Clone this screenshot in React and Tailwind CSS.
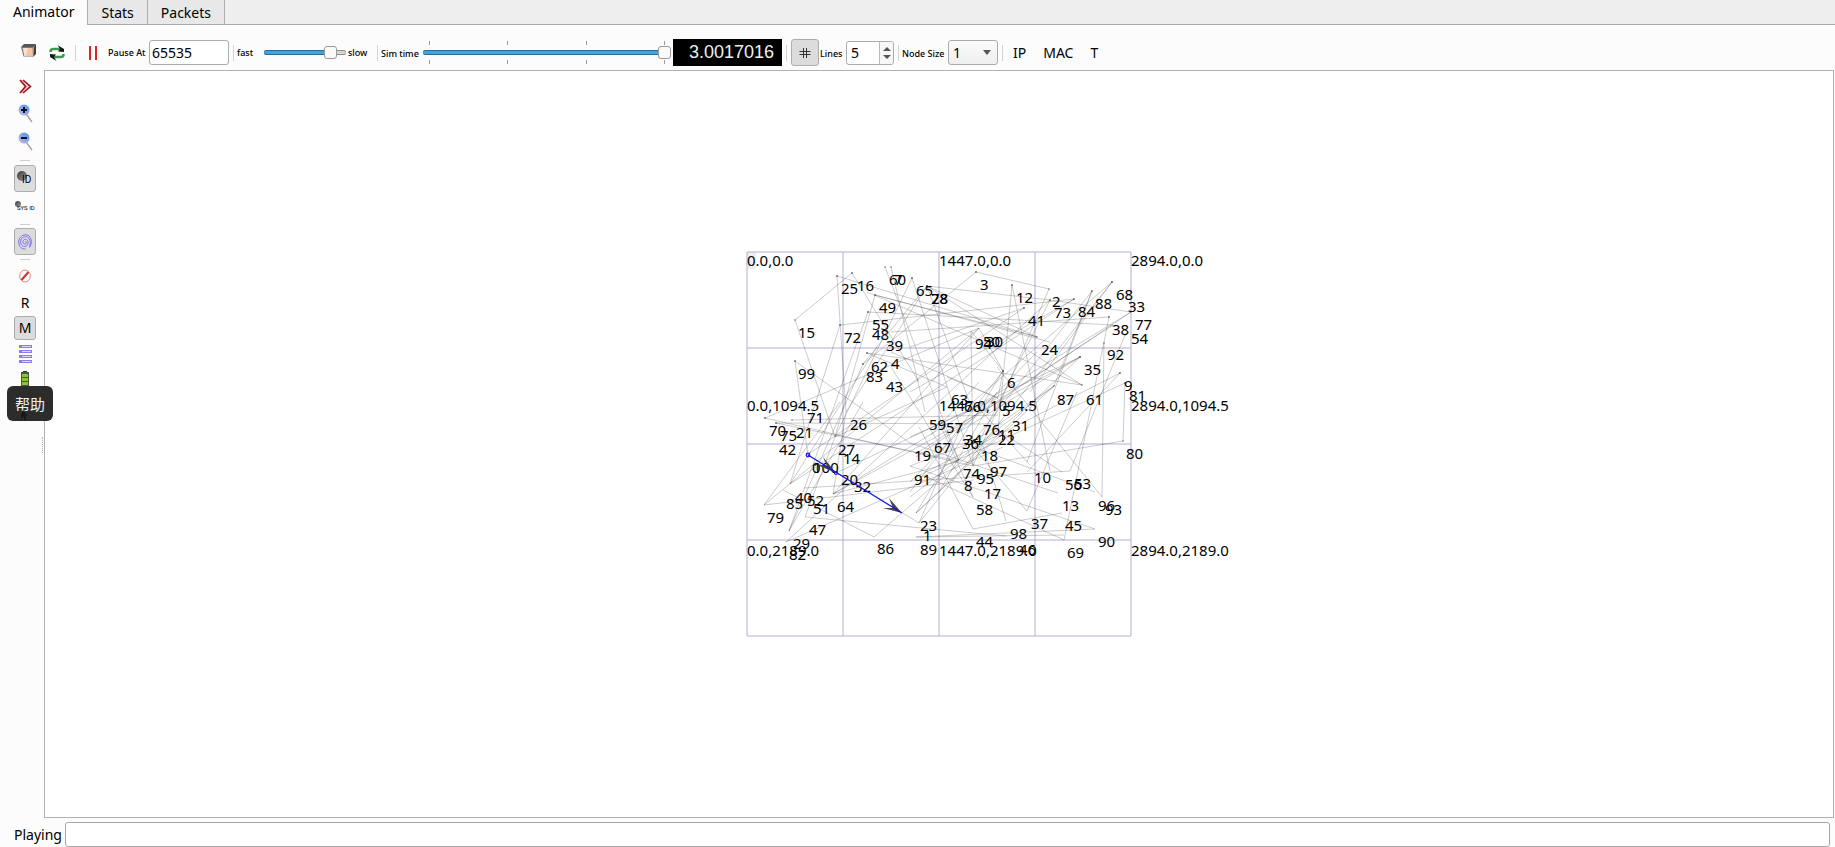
import { useState } from 'react';

// Coordinates inside the 384x384 scene grid: [text, x, baseline]
const NODE_LABELS = [
  ['25', 94, 42], ['16', 110, 39], ['60', 142, 33], ['7', 147, 33], ['65', 169, 44],
  ['28', 184, 52], ['78', 184, 52], ['49', 132, 61], ['55', 125, 78], ['48', 125, 88],
  ['39', 139, 99], ['15', 51, 86], ['72', 97, 91], ['99', 51, 127], ['62', 124, 120],
  ['4', 144, 117], ['83', 119, 130], ['43', 139, 140], ['71', 60, 171], ['26', 103, 178],
  ['59', 182, 178], ['57', 199, 181], ['70', 22, 184], ['75', 33, 189], ['21', 49, 186],
  ['63', 204, 153], ['66', 217, 160], ['3', 233, 38], ['12', 269, 51], ['2', 305, 55],
  ['73', 307, 66], ['84', 331, 65], ['88', 348, 57], ['68', 369, 48], ['33', 381, 60],
  ['41', 281, 74], ['38', 365, 83], ['77', 388, 78], ['54', 384, 92], ['94', 228, 97],
  ['50', 236, 95], ['30', 239, 95], ['24', 294, 103], ['92', 360, 108], ['35', 337, 123],
  ['6', 260, 136], ['9', 377, 139], ['81', 382, 149], ['87', 310, 153], ['61', 339, 153],
  ['5', 255, 164], ['31', 265, 179], ['76', 236, 183], ['11', 251, 188], ['22', 251, 193],
  ['34', 218, 193], ['36', 215, 197], ['67', 187, 201], ['18', 234, 209], ['19', 167, 209],
  ['74', 216, 227], ['97', 243, 225], ['95', 230, 232], ['91', 167, 233], ['8', 217, 239],
  ['10', 287, 231], ['42', 32, 203], ['27', 91, 203], ['14', 96, 212], ['0', 65, 221],
  ['100', 66, 221], ['20', 94, 233], ['32', 107, 240], ['40', 48, 251], ['52', 60, 254],
  ['85', 39, 257], ['51', 66, 262], ['64', 90, 260], ['79', 20, 271], ['47', 62, 283],
  ['29', 46, 297], ['82', 42, 308], ['86', 130, 302], ['89', 173, 303], ['23', 173, 279],
  ['1', 176, 289], ['80', 379, 207], ['56', 318, 238], ['53', 327, 237], ['17', 237, 247],
  ['58', 229, 263], ['13', 315, 259], ['96', 351, 259], ['93', 358, 263], ['37', 284, 277],
  ['45', 318, 279], ['98', 263, 287], ['44', 229, 295], ['46', 272, 303], ['69', 320, 306],
  ['90', 351, 295],
];

const AXIS_LABELS = [
  ['0.0,0.0', 0, 14], ['1447.0,0.0', 192, 14], ['2894.0,0.0', 384, 14],
  ['0.0,1094.5', 0, 159], ['1447.0,1094.5', 192, 159], ['2894.0,1094.5', 384, 159],
  ['0.0,2189.0', 0, 304], ['1447.0,2189.0', 192, 304], ['2894.0,2189.0', 384, 304],
];

// Trails between waypoints: [x1, y1, x2, y2]
const TRAILS = [
  [105, 21, 48, 68], [48, 68, 88, 185], [90, 24, 290, 85], [90, 24, 99, 160],
  [105, 21, 172, 130], [93, 73, 327, 47], [93, 73, 43, 232], [48, 109, 61, 203],
  [48, 109, 163, 191], [18, 166, 232, 76], [18, 166, 226, 214], [29, 171, 212, 209],
  [29, 171, 256, 172], [45, 168, 251, 163], [121, 60, 366, 73], [121, 60, 42, 279],
  [128, 43, 303, 90], [128, 43, 88, 185], [138, 15, 212, 209], [144, 15, 178, 160],
  [165, 26, 226, 214], [165, 26, 88, 185], [120, 101, 200, 135], [120, 101, 335, 133],
  [116, 112, 42, 279], [116, 112, 180, 34], [180, 34, 303, 48], [180, 34, 99, 160],
  [180, 34, 226, 160], [229, 20, 302, 37], [229, 20, 116, 112], [302, 37, 226, 214],
  [265, 33, 251, 178], [265, 33, 303, 219], [303, 48, 232, 190], [303, 48, 384, 60],
  [327, 47, 163, 140], [327, 47, 43, 232], [277, 56, 60, 203], [277, 56, 163, 95],
  [290, 85, 128, 43], [345, 39, 307, 134], [345, 39, 226, 190], [365, 30, 172, 271],
  [365, 30, 283, 140], [365, 30, 226, 150], [362, 65, 317, 288], [362, 65, 144, 80],
  [357, 91, 355, 245], [333, 105, 89, 221], [333, 105, 86, 242], [333, 105, 169, 261],
  [335, 133, 120, 40], [307, 134, 163, 245], [373, 121, 280, 220], [373, 121, 169, 225],
  [384, 60, 169, 205], [378, 83, 323, 219], [378, 131, 376, 189], [378, 131, 172, 226],
  [376, 189, 226, 214], [256, 119, 251, 146], [256, 119, 232, 76], [256, 119, 163, 240],
  [256, 119, 169, 261], [256, 119, 224, 79], [224, 79, 226, 214], [232, 76, 86, 242],
  [232, 76, 17, 253], [251, 146, 163, 185], [303, 48, 39, 290], [366, 73, 172, 200],
  [200, 135, 88, 185], [144, 115, 226, 245], [226, 150, 283, 213], [251, 178, 315, 220],
  [226, 195, 348, 240], [163, 191, 311, 241], [163, 214, 348, 277], [163, 214, 226, 190],
  [184, 183, 232, 130], [212, 209, 86, 242], [57, 236, 226, 225], [226, 225, 323, 219],
  [17, 253, 226, 228], [17, 253, 93, 150], [36, 238, 127, 285], [58, 265, 259, 284],
  [58, 265, 88, 185], [39, 290, 256, 195], [42, 279, 116, 150], [86, 242, 99, 160],
  [127, 285, 251, 178], [172, 271, 61, 203], [172, 271, 212, 180], [169, 285, 348, 277],
  [169, 285, 317, 283], [226, 277, 172, 175], [226, 277, 315, 261], [226, 245, 192, 170],
  [259, 269, 235, 190], [280, 259, 226, 195], [280, 259, 330, 140], [355, 245, 250, 115],
  [317, 288, 180, 225], [212, 209, 192, 165], [163, 230, 290, 100], [192, 240, 250, 140],
  [169, 261, 307, 134], [251, 146, 200, 125], [251, 146, 144, 100], [43, 232, 130, 95],
  [384, 60, 86, 242], [345, 39, 280, 210], [180, 34, 290, 85], [180, 34, 335, 133],
  [307, 134, 226, 190], [333, 105, 212, 180],
];

const GRID = [0, 96, 192, 288, 384];

function Separator({ className = '' }) {
  return <div className={`h-4 w-px shrink-0 bg-[#d4d4d4] ${className}`} />;
}

function SideSeparator() {
  return (
    <div className="flex h-2 items-center">
      <div className="h-px w-[10px] bg-[#cfcfcf]" />
    </div>
  );
}

function SideButton({ label, active, className = 'h-7', onClick, children }) {
  return (
    <button
      type="button"
      aria-label={label}
      onClick={onClick}
      className={`flex w-[22px] shrink-0 items-center justify-center rounded-[3px] ${
        active ? 'border border-[#adadad] bg-[#dcdcdc]' : ''
      } ${className}`}
    >
      {children}
    </button>
  );
}

function Slider({ id, value, onChange, className }) {
  return (
    <input
      id={id}
      type="range"
      min="0"
      max="100"
      value={value}
      onChange={(e) => onChange(Number(e.target.value))}
      style={{ '--fill': `${value}%` }}
      className={`block h-[13px] appearance-none bg-transparent [&::-webkit-slider-runnable-track]:h-[5px] [&::-webkit-slider-runnable-track]:rounded-[2px] [&::-webkit-slider-runnable-track]:bg-[linear-gradient(to_right,#3fa3e3_var(--fill),#d5d5d5_var(--fill))] [&::-webkit-slider-runnable-track]:shadow-[inset_0_1px_0_#00000055,inset_0_-1px_0_#00000055] [&::-webkit-slider-thumb]:-mt-1 [&::-webkit-slider-thumb]:h-[13px] [&::-webkit-slider-thumb]:w-[13px] [&::-webkit-slider-thumb]:appearance-none [&::-webkit-slider-thumb]:rounded-[3px] [&::-webkit-slider-thumb]:border [&::-webkit-slider-thumb]:border-[#999] [&::-webkit-slider-thumb]:bg-[#fafafa] ${className}`}
    />
  );
}

function Ticks() {
  return (
    <div className="flex h-1 justify-between px-[6px]">
      {[0, 1, 2, 3].map((t) => (
        <div key={t} className="h-1 w-px bg-[#999]" />
      ))}
    </div>
  );
}

function CubeIcon() {
  return (
    <svg width="15" height="14" viewBox="0 0 15 14">
      <path d="M0 3 3 0h12l-2 3z" fill="#55575a" />
      <path d="M13 3l2-3v10l-3 3z" fill="#3a3c40" />
      <path d="M0 3h12.500v9.500H2.500z" fill="#8d7568" />
      <path d="M1.500 4h10l.5 8H3.500z" fill="#f3c4a4" />
      <path d="M2 4h5l-2 8H3.500z" fill="#fbe0cf" />
    </svg>
  );
}

function ReloadIcon() {
  return (
    <svg width="16" height="16" viewBox="0 0 16 16" fill="none">
      <path d="M1.500 7V6.500Q1.500 4 4.500 4H11" stroke="#3d9a4a" strokeWidth="2.500" />
      <path d="M14.500 9v.5q0 2.500-3 2.500H5" stroke="#3d9a4a" strokeWidth="2.500" />
      <path d="M8.500 0 15 4v3L9 6.500 11 4z" fill="#151c17" />
      <path d="M7.500 16 1 12V9l6 .5L5 12z" fill="#151c17" />
    </svg>
  );
}

function ZoomIcon({ plus }) {
  return (
    <svg width="15" height="19" viewBox="0 0 15 19">
      <defs>
        <linearGradient id="lens" x1="1" y1="0" x2="0" y2="1">
          <stop offset="0.3" stopColor="#6a9df0" />
          <stop offset="1" stopColor="#d0bcd2" />
        </linearGradient>
      </defs>
      <path d="M8.500 10.500 14 18" stroke="#b09a9a" strokeWidth="1.300" />
      <circle cx="6" cy="6" r="5.500" fill="url(#lens)" />
      <path d={plus ? 'M3 6h6M6 3v6' : 'M3 6h6'} stroke="#0b1222" strokeWidth="2" />
    </svg>
  );
}

function NodeBall({ size }) {
  return (
    <svg width={size} height={size} viewBox="0 0 10 10">
      <defs>
        <linearGradient id="ball" x1="0" y1="0" x2="1" y2="1">
          <stop offset="0" stopColor="#3c3c3c" />
          <stop offset="1" stopColor="#9a9a9a" />
        </linearGradient>
      </defs>
      <circle cx="5" cy="5" r="5" fill="url(#ball)" />
    </svg>
  );
}

function Scene() {
  return (
    <svg
      width="384"
      height="384"
      viewBox="0 0 384 384"
      className="overflow-visible"
      fontFamily="'Noto Sans', 'Open Sans', sans-serif"
      fontSize="15"
    >
      <rect x="0" y="0" width="9" height="17" fill="#efefef" />
      <g stroke="#b3aed2" strokeWidth="1">
        {GRID.map((p) => (
          <path key={p} d={`M${p} 0V384M0 ${p}H384`} />
        ))}
      </g>
      <g stroke="#000" strokeOpacity="0.26" strokeWidth="0.8">
        {TRAILS.map(([x1, y1, x2, y2], i) => (
          <line key={i} x1={x1} y1={y1} x2={x2} y2={y2} />
        ))}
      </g>
      <g fill="#555">
        {TRAILS.slice(0, 64).map(([x, y], i) => (
          <circle key={i} cx={x} cy={y} r="0.7" />
        ))}
      </g>
      <g fill="#000">
        {AXIS_LABELS.map(([text, x, y]) => (
          <text key={text} x={x} y={y}>{text}</text>
        ))}
        {NODE_LABELS.map(([text, x, y]) => (
          <text key={text} x={x} y={y}>{text}</text>
        ))}
      </g>
      {/* packet in flight */}
      <g fill="#45454a">
        <path d="M155 261 142 246 146 256 136 256z" />
        <path d="M89 221 76 205 80 214 68 212z" />
      </g>
      <g fill="none" stroke="#1414e6" strokeWidth="1.200">
        <path d="M61 203 155 261" />
        <circle cx="61" cy="203" r="1.800" />
        <circle cx="89" cy="221" r="1.500" />
      </g>
    </svg>
  );
}

export default function App() {
  const [tab, setTab] = useState('Animator');
  const [pauseAt, setPauseAt] = useState('65535');
  const [speed, setSpeed] = useState(87);
  const [simTime, setSimTime] = useState(100);
  const [lines, setLines] = useState(5);
  const [nodeSize, setNodeSize] = useState('1');
  const [status, setStatus] = useState('');

  return (
    <div className="flex min-h-screen flex-col bg-[#fcfcfc] font-['Noto_Sans','Noto_Sans_CJK_SC',sans-serif] text-sm leading-5 text-black">
      <nav className="flex h-[25px] border-b border-[#a9a9a9] bg-[#eeeeee]">
        {['Animator', 'Stats', 'Packets'].map((name) => (
          <button
            key={name}
            type="button"
            onClick={() => setTab(name)}
            className={`border-r border-[#adadad] px-[13px] ${
              tab === name ? '-mb-px bg-[#fcfcfc] pb-px' : 'bg-[#e8e8e8] pt-px'
            }`}
          >
            {name}
          </button>
        ))}
      </nav>

      <div className="flex h-[45px] items-center pt-[10px] pl-[21px]">
        <button type="button" aria-label="Open trace file" className="mb-1 w-7">
          <CubeIcon />
        </button>
        <button type="button" aria-label="Reload trace" className="w-[26px]">
          <ReloadIcon />
        </button>
        <Separator />
        <button type="button" aria-label="Pause" className="ml-3 flex w-5 gap-1 pl-px">
          <span className="h-[14px] w-[2px] bg-[#dd2222]" />
          <span className="h-[14px] w-[2px] bg-[#dd2222]" />
        </button>
        <label htmlFor="pause-at" className="w-[41px] text-[9px] font-medium whitespace-nowrap">Pause At</label>
        <input
          id="pause-at"
          type="text"
          value={pauseAt}
          onChange={(e) => setPauseAt(e.target.value)}
          className="h-[25px] w-20 rounded-[3px] border border-[#ababab] bg-white px-[2px]"
        />
        <Separator className="ml-1" />
        <label htmlFor="speed" className="ml-[3px] w-[27px] text-[9px] font-medium">fast</label>
        <Slider id="speed" value={speed} onChange={setSpeed} className="w-[82px]" />
        <span className="ml-[2px] w-[29px] text-[9px] font-medium">slow</span>
        <Separator />
        <label htmlFor="sim-time" className="ml-[3px] w-[42px] pt-[2px] text-[9px] font-medium whitespace-nowrap">Sim time</label>
        <div className="flex w-[248px] flex-col gap-px">
          <Ticks />
          <Slider id="sim-time" value={simTime} onChange={setSimTime} className="w-full" />
          <Ticks />
        </div>
        <output
          htmlFor="sim-time"
          className="ml-[2px] h-[27px] w-[109px] bg-black pr-2 text-right font-['Liberation_Sans',sans-serif] text-[18px] leading-[27px] text-[#eeeeee]"
        >
          3.0017016
        </output>
        <Separator className="ml-1" />
        <button
          type="button"
          aria-label="Grid"
          className="ml-1 flex h-[27px] w-7 items-center justify-center rounded-[3px] border border-[#adadad] bg-[#dcdcdc]"
        >
          <svg width="12" height="12" viewBox="0 0 12 12" stroke="#333" fill="none">
            <path d="M.5 4.500h11M.5 7.500h11M4.500 1v10M7.500 1v10" />
          </svg>
        </button>
        <label htmlFor="grid-lines" className="ml-px w-[26px] pt-[2px] text-[9px] font-medium">Lines</label>
        <div className="flex h-6 w-12 overflow-hidden rounded-[3px] border border-[#ababab] bg-white">
          <input
            id="grid-lines"
            type="text"
            value={lines}
            onChange={(e) => setLines(Number(e.target.value) || 0)}
            className="w-8 pl-1"
          />
          <div className="flex flex-1 flex-col items-center justify-center gap-1 border-l border-[#b8b8b8] bg-[#f7f7f7]">
            <button type="button" aria-label="More lines" onClick={() => setLines(lines + 1)}>
              <svg width="8" height="4" viewBox="0 0 8 4" className="block"><path d="M0 4 4 0l4 4z" fill="#555" /></svg>
            </button>
            <button type="button" aria-label="Fewer lines" onClick={() => setLines(lines - 1)}>
              <svg width="8" height="4" viewBox="0 0 8 4" className="block"><path d="M0 0h8L4 4z" fill="#555" /></svg>
            </button>
          </div>
        </div>
        <Separator className="ml-1" />
        <label htmlFor="node-size" className="ml-[3px] w-[46px] pt-[2px] text-[9px] font-medium whitespace-nowrap">Node Size</label>
        <div className="relative">
          <select
            id="node-size"
            value={nodeSize}
            onChange={(e) => setNodeSize(e.target.value)}
            className="block h-[25px] w-[50px] appearance-none rounded-[3px] border border-[#ababab] bg-linear-to-b from-[#fbfbfb] to-[#efefef] pl-1"
          >
            <option>1</option>
            <option>2</option>
            <option>5</option>
            <option>10</option>
          </select>
          <svg width="8" height="5" viewBox="0 0 8 5" className="pointer-events-none absolute top-[10px] right-[7px]">
            <path d="M0 0h8L4 5z" fill="#555" />
          </svg>
        </div>
        <Separator className="ml-1" />
        <div className="ml-[10px] flex gap-[17px]">
          <button type="button">IP</button>
          <button type="button">MAC</button>
          <button type="button">T</button>
        </div>
      </div>

      <div className="flex flex-1 pr-px">
        <aside className="relative flex w-11 shrink-0 flex-col items-center pt-[2px] pl-[6px]">
          <SideButton label="Expand">
            <svg width="13" height="15" viewBox="0 0 13 15" fill="none">
              <path d="M1 1h2.500l8 6.500-8 6.500H1l5-6.500z" fill="#f3c9c9" />
              <path d="M1 1l5.500 6.500L1 14M4 1l7.500 6.500L4 14" stroke="#a01218" strokeWidth="1.600" />
            </svg>
          </SideButton>
          <SideButton label="Zoom in" className="h-[26px]"><ZoomIcon plus /></SideButton>
          <SideButton label="Zoom out" className="h-[30px]"><ZoomIcon /></SideButton>
          <div className="flex h-[9px] items-center">
            <div className="h-px w-[10px] bg-[#cfcfcf]" />
          </div>
          <SideButton label="Show node ID" active className="h-[27px]">
            <span className="relative h-4 w-4 text-left">
              <NodeBall size={10} />
              <span className="absolute top-[3px] left-[5px] font-['Roboto',sans-serif] text-[10px] leading-3">ID</span>
            </span>
          </SideButton>
          <SideButton label="Show system ID">
            <span className="relative h-[10px] w-5">
              <NodeBall size={6} />
              <span className="absolute top-[3px] left-[2px] font-['Roboto',sans-serif] text-[6px] leading-[8px] whitespace-nowrap">SYS ID</span>
            </span>
          </SideButton>
          <SideSeparator />
          <SideButton label="Show wireless circles" active className="h-[27px]">
            <svg width="14" height="16" viewBox="0 0 14 16" fill="none" stroke="#7f6ff0" strokeWidth="1">
              <path d="M7 8.500C8.500 6.500 9.300 9.500 7.300 10 4.500 10.500 4 6.500 6.500 5.500 10 4.500 11 9 9 11.500 6 14 2.500 11.500 2.600 7.500 3 3 7 2 9.500 3.200 12.500 5 13 9.500 11.300 12.500" />
              <path d="M11.500 13.500C14.500 9 13.500 3 10 1.300 5-.5.7 3 .7 8 1 12.500 3.500 15.500 7.500 15" />
            </svg>
          </SideButton>
          <SideSeparator />
          <SideButton label="Hide packets" className="h-[25px]">
            <svg width="12" height="14" viewBox="0 0 12 14" fill="none">
              <ellipse cx="6" cy="7" rx="5.300" ry="6" stroke="#e08a8a" />
              <path d="M2.500 11 9.500 3" stroke="#cc3030" strokeWidth="2" />
            </svg>
          </SideButton>
          <SideButton label="Reset view"><span className="pt-[2px]">R</span></SideButton>
          <SideButton label="Show metadata" active className="h-6">M</SideButton>
          <SideButton label="Show queues">
            <svg width="13" height="18" viewBox="0 0 13 18">
              {[0, 5, 10, 15].map((y) => (
                <g key={y}>
                  <rect x="0" y={y} width="13" height="3" fill="#8a7cf0" />
                  <rect x="3" y={y + 1} width="9" height="1" fill="#dcd8fb" />
                </g>
              ))}
            </svg>
          </SideButton>
          <SideButton label="Battery capacity" className="h-[25px]">
            <svg width="8" height="20" viewBox="0 0 8 20">
              <rect x="2" y="0" width="4" height="2" fill="#333" />
              <rect x="0" y="1" width="8" height="19" fill="#4a5a3a" />
              {[3, 7, 11, 15].map((y) => (
                <rect key={y} x="1" y={y} width="6" height="3" fill="#86c440" />
              ))}
            </svg>
          </SideButton>
          <div className="absolute top-[367px] left-[42px] h-4 border-l border-dotted border-[#b5b5b5]" />
          <div
            role="tooltip"
            className="absolute top-[316px] left-[7px] z-10 flex h-[35px] w-[46px] items-center justify-center rounded-md bg-[#2c2c2c] text-[15px] text-[#f0f0f0]"
          >
            帮助
            <svg width="8" height="11" viewBox="0 0 8 11" className="absolute bottom-0 left-[13px]">
              <path d="M2 0l6 6-3-.5 1.500 4.500-1.500.5-1.500-4L1 9z" fill="#161616" />
            </svg>
          </div>
        </aside>
        <main className="flex flex-1 items-center justify-center overflow-hidden border border-[#b2b2b2] bg-white">
          <Scene />
        </main>
      </div>

      <footer className="flex h-[29px] items-center pt-1 pr-[5px] pl-[14px]">
        <label htmlFor="status" className="w-[51px]">Playing</label>
        <input
          id="status"
          type="text"
          value={status}
          onChange={(e) => setStatus(e.target.value)}
          className="h-[25px] min-w-0 flex-1 rounded-[3px] border border-[#a6a6a6] bg-white px-1"
        />
      </footer>
    </div>
  );
}
